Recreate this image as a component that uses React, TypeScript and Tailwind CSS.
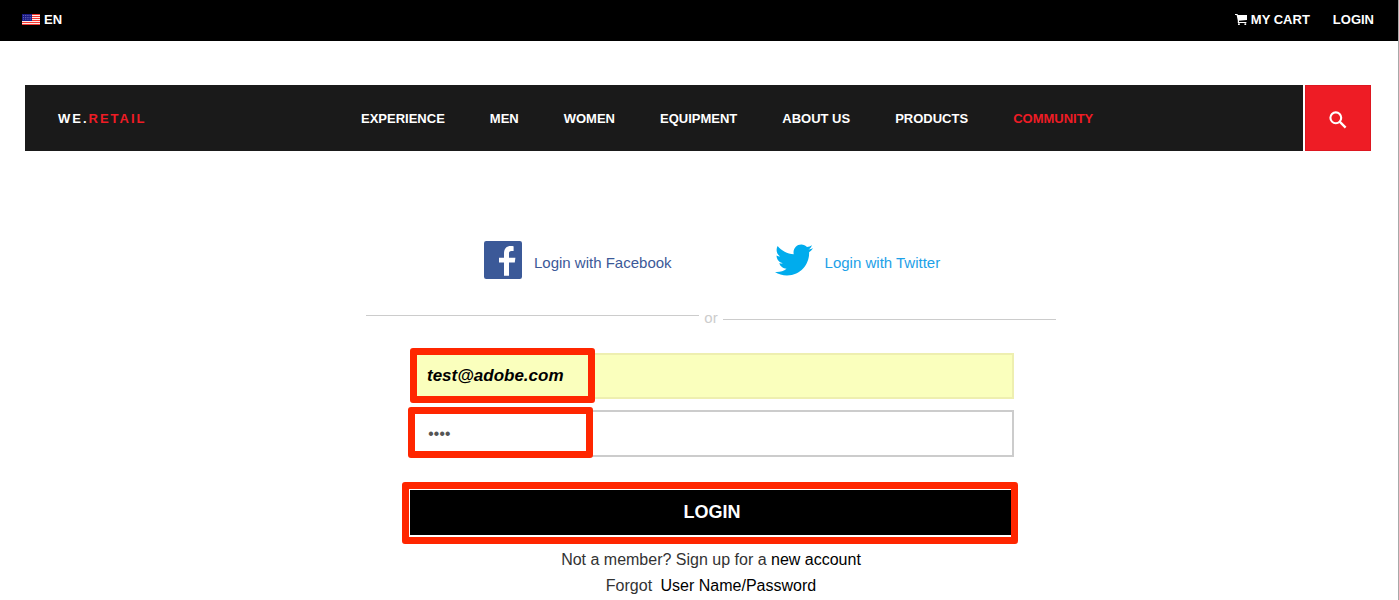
import { FaTwitter } from "react-icons/fa";

const navItems = [
  { label: "EXPERIENCE" },
  { label: "MEN" },
  { label: "WOMEN" },
  { label: "EQUIPMENT" },
  { label: "ABOUT US" },
  { label: "PRODUCTS" },
  { label: "COMMUNITY", active: true },
];

function UsFlag() {
  return (
    <svg viewBox="0 0 18 11" className="h-[11px] w-[18px]" aria-hidden="true">
      <rect width="18" height="11" fill="#fff" />
      {[0, 2, 4, 6, 8, 10].map((y) => (
        <rect key={y} y={y} width="18" height="1.1" fill="#f4372f" />
      ))}
      <rect width="10" height="7" fill="#1b1b85" />
      {[1.2, 3, 4.8].map((y) =>
        [1.2, 3, 4.8, 6.6, 8.4].map((x) => (
          <rect key={`${x}-${y}`} x={x} y={y} width="0.7" height="0.7" fill="#a9a9dd" />
        )),
      )}
    </svg>
  );
}

function CartIcon() {
  return (
    <svg viewBox="0 0 12 11" className="h-[11px] w-3" fill="#fff" aria-hidden="true">
      <path d="M0 0h2.4l.6 1H12v5L4 6.8V8h7.4v1H2.8V6.4L1.6 1H0z" />
      <rect x="3" y="9.2" width="1.8" height="1.8" rx="0.6" />
      <rect x="9.4" y="9.2" width="1.8" height="1.8" rx="0.6" />
    </svg>
  );
}

function SearchIcon() {
  return (
    <svg viewBox="0 0 18 18" className="size-[18px]" fill="none" stroke="#fff" aria-hidden="true">
      <circle cx="6.8" cy="6.8" r="5.4" strokeWidth="2.1" />
      <path d="M10.6 10.6l6 6" strokeWidth="2.3" />
    </svg>
  );
}

function FacebookLogo() {
  return (
    <svg viewBox="0 0 38 38" className="size-[38px]" aria-hidden="true">
      <rect width="38" height="38" rx="2.2" fill="#3b5998" />
      <path
        d="M20 34.8V21.4h-5v-4.6h5v-4.2c0-4.9 2.4-7.6 6.8-7.6 1.3 0 2.4.1 2.8.2v4.9h-2c-2.2 0-2.6 1.1-2.6 2.6v4.1h6.4l-.6 4.6H25v13.4z"
        fill="#fff"
      />
    </svg>
  );
}

export default function App() {
  return (
    <div className="min-h-screen border-r border-[#a8a8a8] bg-white font-['Liberation_Sans',Arial,sans-serif] text-[15px] leading-5 text-[#333]">
      <header>
        <div className="flex h-[41px] items-center justify-between bg-black pr-6 pb-[2px] pl-[22px] text-[13px] font-bold text-white">
          <a href="#language" className="flex items-center gap-1">
            <UsFlag />
            EN
          </a>
          <div className="flex items-center gap-[23px]">
            <a href="#cart" className="flex items-center gap-1">
              <CartIcon />
              MY CART
            </a>
            <a href="#login">LOGIN</a>
          </div>
        </div>
        <div className="mt-11 mr-[27px] ml-[25px] flex h-[66px] gap-[2px] text-[13px] font-bold text-white">
          <div className="flex grow items-center bg-[#1a1a1a] pt-[2px] pl-[33px]">
            <a href="#home" className="w-[303px] tracking-[2px]">
              WE.<span className="text-[#ee1c25]">RETAIL</span>
            </a>
            <nav className="flex gap-[45px]">
              {navItems.map((item) => (
                <a
                  key={item.label}
                  href="#section"
                  className={item.active ? "text-[#ee1c25]" : "text-white"}
                >
                  {item.label}
                </a>
              ))}
            </nav>
          </div>
          <button
            type="button"
            aria-label="Search"
            className="flex w-[66px] items-center justify-center border border-[#dd1720] bg-[#ee1c25] pt-1"
          >
            <SearchIcon />
          </button>
        </div>
      </header>

      <main className="pt-[90px] pl-6">
        <div className="mx-auto flex max-w-[690px] flex-col">
          <div className="flex gap-[103px] pl-[118px]">
            <a href="#facebook" className="flex items-center gap-3 text-[#3b5998]">
              <FacebookLogo />
              <span className="pt-[6px]">Login with Facebook</span>
            </a>
            <a href="#twitter" className="flex items-center gap-3 text-[#1da1e8]">
              <FaTwitter className="size-[38px] text-[#00aced]" aria-hidden="true" />
              <span className="pt-[6px]">Login with Twitter</span>
            </a>
          </div>

          <div className="mt-[29px] flex text-[#ccc]">
            <div className="mt-[7px] grow border-t border-[#ccc]" />
            <span className="w-6 text-center">or</span>
            <div className="mt-[11px] grow border-t border-[#ccc]" />
          </div>

          <form className="mt-[25px] pr-[42px] pl-11" onSubmit={(e) => e.preventDefault()}>
            <div className="relative">
              <input
                type="text"
                aria-label="User name"
                defaultValue="test@adobe.com"
                className="block h-[46px] w-full border-2 border-[#eeefb0] bg-[#faffbd] px-[15px] text-[17px] font-bold text-black italic outline-none"
              />
              <div className="pointer-events-none absolute -top-[5px] left-0 h-[55px] w-[185px] rounded-[3px] border-[7px] border-[#ff2600]" />
            </div>
            <div className="relative mt-[11px]">
              <input
                type="password"
                aria-label="Password"
                defaultValue="test"
                className="block h-[47px] w-full border-2 border-[#ccc] bg-white px-4 text-base text-[#555] italic outline-none"
              />
              <div className="pointer-events-none absolute -top-[3px] -left-[2px] h-[51px] w-[185px] rounded-[3px] border-[7px] border-[#ff2600]" />
            </div>
            <div className="relative mt-[33px]">
              <button type="submit" className="block h-[45px] w-full bg-black pb-[2px] text-lg font-bold text-white">
                LOGIN
              </button>
              <div className="pointer-events-none absolute -top-2 -right-1 -left-2 h-[62px] rounded-[3px] border-[7px] border-[#ff2600]" />
            </div>
          </form>

          <div className="mt-3 text-center text-base leading-[26px]">
            <p>
              Not a member? Sign up for a{" "}
              <a href="#signup" className="text-black">
                new account
              </a>
            </p>
            <p>
              Forgot{" "}
              <a href="#forgot" className="ml-1 text-black">
                User Name/Password
              </a>
            </p>
          </div>
        </div>
      </main>
    </div>
  );
}
